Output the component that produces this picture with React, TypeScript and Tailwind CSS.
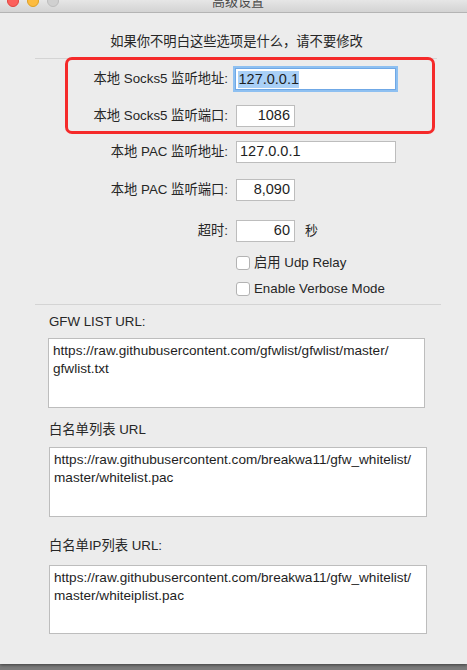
import React from "react";

const font = { fontFamily: '"Liberation Sans", "Noto Sans CJK SC", sans-serif' };

const FieldRow = ({
  label,
  value,
  wide,
  focused,
  suffix,
  className,
}: {
  label: string;
  value: string;
  wide?: boolean;
  focused?: boolean;
  suffix?: string;
  className?: string;
}) => (
  <div className={`flex items-center h-[22px] ${className ?? ""}`}>
    <div className="w-[229px] text-right text-[13.3px] text-[#262626] pr-[1px]">{label}</div>
    {focused ? (
      <div className="ml-[6px] w-[161px] h-[22px] bg-white border border-[#6fa8e6] ring-[2px] ring-[#8ec0f1] flex items-center px-[2px]">
        <span className="bg-[#a9d0f7] text-[14.5px] text-[#1e1e1e] leading-[17px] px-[0.5px]">{value}</span>
      </div>
    ) : (
      <div
        className={`ml-[7px] h-[22px] bg-white border border-[#bdbdbd] flex items-center text-[14.5px] text-[#1e1e1e] ${
          wide ? "w-[160px] px-[3px]" : "w-[59px] justify-end px-[4px]"
        }`}
      >
        {value}
      </div>
    )}
    {suffix && <span className="ml-[10px] text-[13px] text-[#262626]">{suffix}</span>}
  </div>
);

const Check = ({ label, className }: { label: string; className?: string }) => (
  <div className={`flex items-center h-[16px] pl-[236px] ${className ?? ""}`}>
    <div className="w-[14px] h-[14px] bg-white border border-[#b3b3b3] rounded-[3px]" />
    <span className="ml-[4px] text-[13.3px] text-[#262626]">{label}</span>
  </div>
);

const UrlBox = ({ text, className }: { text: string; className?: string }) => (
  <div
    className={`bg-white border border-[#bdbdbd] text-[13.6px] leading-[18px] text-[#1e1e1e] px-[4px] pt-[3px] ${className ?? ""}`}
  >
    {text}
  </div>
);

export default function App() {
  return (
    <div className="w-[467px] h-[670px] overflow-hidden bg-[#7b7b7b]" style={font}>
      <div className="relative h-[664px] bg-[#ececec] shadow-[0_1px_3px_rgba(0,0,0,0.5)] flex flex-col">
        {/* title bar */}
        <div className="h-[13px] shrink-0 bg-gradient-to-b from-[#e6e6e6] to-[#d3d3d3] border-b border-[#b4b4b4] flex items-start overflow-hidden">
          <div className="flex gap-[8px] pl-[7px] -mt-[5px]">
            <div className="w-[12px] h-[12px] rounded-full bg-[#fc605c] border border-[#e0443e]" />
            <div className="w-[12px] h-[12px] rounded-full bg-[#fdbc40] border border-[#dea123]" />
            <div className="w-[12px] h-[12px] rounded-full bg-[#d0d0d0] border border-[#bdbdbd]" />
          </div>
          <div className="flex-1 text-center -mt-[8px] pr-[50px] text-[13px] text-[#4a4a4a]">高级设置</div>
        </div>

        <div className="mt-[19px] h-[20px] text-center pl-[6px] text-[13.3px] leading-[20px] text-[#262626]">
          如果你不明白这些选项是什么，请不要修改
        </div>
        <div className="mt-[6px] ml-[35px] mr-[30px] h-px bg-[#d4d4d4]" />

        <FieldRow className="mt-[9px]" label="本地 Socks5 监听地址:" value="127.0.0.1" focused />
        <FieldRow className="mt-[15px]" label="本地 Socks5 监听端口:" value="1086" />
        <FieldRow className="mt-[14px]" label="本地 PAC 监听地址:" value="127.0.0.1" wide />
        <FieldRow className="mt-[16px]" label="本地 PAC 监听端口:" value="8,090" />
        <FieldRow className="mt-[19px]" label="超时:" value="60" suffix="秒" />

        <Check className="mt-[13px]" label="启用 Udp Relay" />
        <Check className="mt-[10px]" label="Enable Verbose Mode" />

        <div className="mt-[7px] ml-[35px] mr-[26px] h-px bg-[#d4d4d4]" />

        <div className="mt-[8px] ml-[49px] h-[18px] text-[13.3px] leading-[18px] text-[#262626]">GFW LIST URL:</div>
        <UrlBox
          className="mt-[7px] ml-[48px] w-[377px] h-[70px]"
          text="https://raw.githubusercontent.com/gfwlist/gfwlist/master/ gfwlist.txt"
        />

        <div className="mt-[13px] ml-[49px] h-[18px] text-[13.3px] leading-[18px] text-[#262626]">白名单列表 URL</div>
        <UrlBox
          className="mt-[8px] ml-[49px] w-[378px] h-[70px]"
          text="https://raw.githubusercontent.com/breakwa11/gfw_whitelist/ master/whitelist.pac"
        />

        <div className="mt-[20px] ml-[49px] h-[18px] text-[13.3px] leading-[18px] text-[#262626]">白名单IP列表 URL:</div>
        <UrlBox
          className="mt-[10px] ml-[49px] w-[378px] h-[69px]"
          text="https://raw.githubusercontent.com/breakwa11/gfw_whitelist/ master/whiteiplist.pac"
        />

        {/* red annotation box drawn over the first two rows */}
        <div className="absolute left-[65px] top-[57px] w-[370px] h-[77px] border-[3px] border-[#f52a2a] rounded-[7px] pointer-events-none" />
      </div>
    </div>
  );
}
